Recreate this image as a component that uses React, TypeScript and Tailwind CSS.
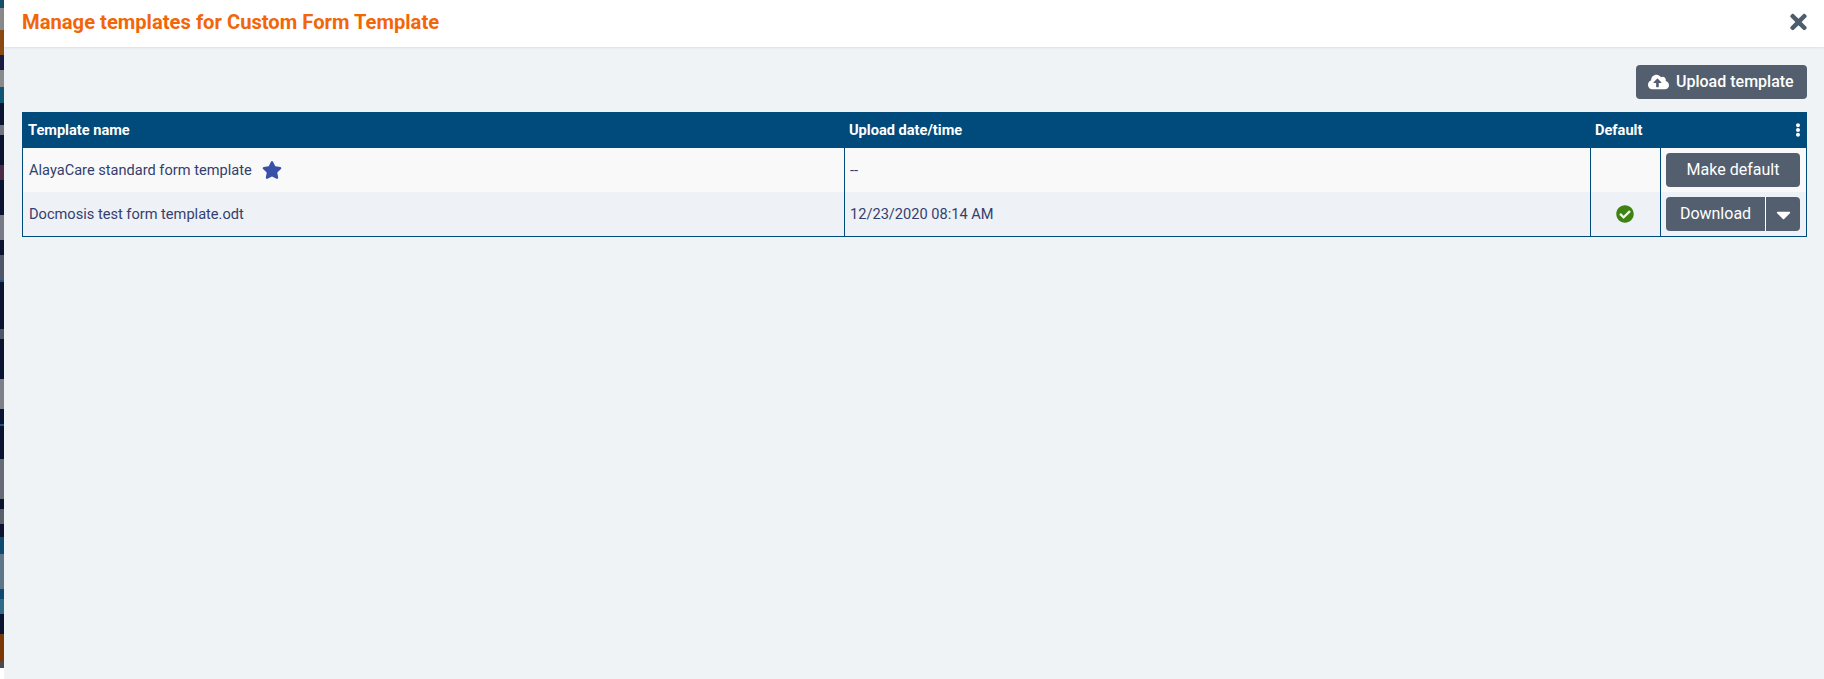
import { FaCheckCircle, FaCloudUploadAlt, FaStar, FaTimes, FaEllipsisV, FaCaretDown } from 'react-icons/fa'

const BTN = 'flex items-center justify-center rounded bg-[#535f6f] text-[16px] text-white'

// the page behind the modal, only a sliver shows on the left
const BACKDROP = [
  ['h-[8px]', 'bg-[#14506a]'],
  ['h-[22px]', 'bg-[#8a8a8a]'],
  ['h-[25px]', 'bg-[#8a4a12]'],
  ['h-[15px]', 'bg-[#1a1a45]'],
  ['h-[17px]', 'bg-[#8a8a8a]'],
  ['h-[16px]', 'bg-[#0d5775]'],
  ['h-[22px]', 'bg-[#0a1430]'],
  ['h-[10px]', 'bg-[#6f7480]'],
  ['h-[30px]', 'bg-[#0a1430]'],
  ['h-[15px]', 'bg-[#4a2a45]'],
  ['h-[35px]', 'bg-[#0a1430]'],
  ['h-[25px]', 'bg-[#777b85]'],
  ['h-[15px]', 'bg-[#0a1430]'],
  ['h-[25px]', 'bg-[#50566a]'],
  ['h-[2px]', 'bg-[#1a5580]'],
  ['h-[47px]', 'bg-[#0a1430]'],
  ['h-[10px]', 'bg-[#50566a]'],
  ['h-[40px]', 'bg-[#0a1430]'],
  ['h-[30px]', 'bg-[#7d8088]'],
  ['h-[15px]', 'bg-[#0a1430]'],
  ['h-[2px]', 'bg-[#1a5580]'],
  ['h-[33px]', 'bg-[#0a1430]'],
  ['h-[40px]', 'bg-[#666a75]'],
  ['h-[10px]', 'bg-[#0a1430]'],
  ['h-[15px]', 'bg-[#5a5f6b]'],
  ['h-[13px]', 'bg-[#0a1430]'],
  ['h-[17px]', 'bg-[#0c4a70]'],
  ['h-[35px]', 'bg-[#5f7688]'],
  ['h-[10px]', 'bg-[#0c4a70]'],
  ['h-[15px]', 'bg-[#2f6a88]'],
  ['h-[20px]', 'bg-[#0a1430]'],
  ['h-[27px]', 'bg-[#7a3806]'],
  ['h-[7px]', 'bg-[#4a4a52]'],
]

export default function App() {
  return (
    <div className="flex h-[679px] w-full overflow-hidden font-['Roboto',sans-serif]">
      <div className="flex w-[4px] shrink-0 flex-col">
        {BACKDROP.map(([h, bg], i) => (
          <div key={i} className={`${h} ${bg}`} />
        ))}
      </div>
      <div className="flex min-w-0 flex-1 flex-col bg-[#eff3f6]">
        <div className="flex h-[47px] shrink-0 items-center justify-between bg-white pl-[18px] pr-[17px] shadow-[0_1px_2px_rgba(0,0,0,0.08)]">
          <h1 className="mb-[3px] text-[20.2px] font-bold text-[#f26608]">Manage templates for Custom Form Template</h1>
          <FaTimes className="mb-[4px] h-[24px] w-[17px] text-[#4d5d6c]" />
        </div>
        <div className="pl-[18px] pr-[17px] pt-[18px]">
          <div className="flex justify-end">
            <button className={`${BTN} h-[34px] w-[171px] !justify-start gap-[7px] pl-[12px] font-medium`}>
              <FaCloudUploadAlt className="h-[20px] w-[21px]" />
              Upload template
            </button>
          </div>
          <div className="mt-[13px] border border-t-0 border-[#004a7c]">
            <div className="flex h-[36px] items-center bg-[#004a7c] text-[14.6px] font-bold text-white">
              <div className="w-[822px] pl-[5px] pt-[2px]">Template name</div>
              <div className="w-[746px] pl-[4px] pt-[2px]">Upload date/time</div>
              <div className="flex-1 pl-[4px] pt-[2px]">Default</div>
              <FaEllipsisV className="mr-[3px] h-[14px] w-[10px]" />
            </div>
            <div className="flex h-[44px] bg-[#f9f9f9] text-[14.6px] text-[#343f6e]">
              <div className="flex w-[822px] items-center gap-[10px] border-r border-[#004a7c] pl-[6px] pt-[2px]">
                AlayaCare standard form template
                <FaStar className="mb-[2px] h-[18px] w-[20px] text-[#3850a8]" />
              </div>
              <div className="flex w-[746px] items-center border-r border-[#004a7c] pl-[5px] pt-[2px]">--</div>
              <div className="w-[70px] border-r border-[#004a7c]" />
              <div className="flex flex-1 items-center pl-[5px]">
                <button className={`${BTN} h-[34px] w-[134px]`}>Make default</button>
              </div>
            </div>
            <div className="flex h-[44px] bg-[#eef1f6] text-[14.6px] text-[#343f6e]">
              <div className="flex w-[822px] items-center border-r border-[#004a7c] pl-[6px] pt-[2px]">
                Docmosis test form template.odt
              </div>
              <div className="flex w-[746px] items-center border-r border-[#004a7c] pl-[5px] pt-[2px]">12/23/2020 08:14 AM</div>
              <div className="flex w-[70px] items-center justify-center border-r border-[#004a7c]">
                <FaCheckCircle className="mb-[1px] mr-[1px] h-[18px] w-[18px] text-[#3f8212]" />
              </div>
              <div className="flex flex-1 items-center pl-[5px]">
                <div className="flex h-[34px] w-[134px] overflow-hidden rounded bg-[#535f6f] text-[16px] text-white">
                  <button className="flex w-[100px] items-center justify-center border-r border-white">Download</button>
                  <button className="flex flex-1 items-center justify-center">
                    <FaCaretDown className="h-[23px] w-[15px]" />
                  </button>
                </div>
              </div>
            </div>
          </div>
        </div>
      </div>
    </div>
  )
}
